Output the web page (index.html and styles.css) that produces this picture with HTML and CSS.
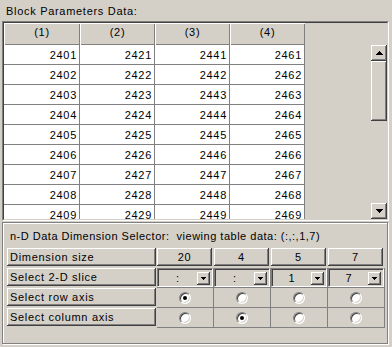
FILE: index.html
```html
<!DOCTYPE html>
<html>
<head>
<meta charset="utf-8">
<link rel="stylesheet" href="styles.css">
</head>
<body>
<div class="title">Block Parameters Data:</div>
<div class="frame">
  <div class="frame-inner">
    <div class="sheet">
      <div class="hrow">
        <div class="hcell w1">(1)</div>
        <div class="hcell">(2)</div>
        <div class="hcell">(3)</div>
        <div class="hcell">(4)</div>
      </div>
      <div class="drow"><div class="dcell w1">2401</div><div class="dcell">2421</div><div class="dcell">2441</div><div class="dcell">2461</div></div>
      <div class="drow"><div class="dcell w1">2402</div><div class="dcell">2422</div><div class="dcell">2442</div><div class="dcell">2462</div></div>
      <div class="drow"><div class="dcell w1">2403</div><div class="dcell">2423</div><div class="dcell">2443</div><div class="dcell">2463</div></div>
      <div class="drow"><div class="dcell w1">2404</div><div class="dcell">2424</div><div class="dcell">2444</div><div class="dcell">2464</div></div>
      <div class="drow"><div class="dcell w1">2405</div><div class="dcell">2425</div><div class="dcell">2445</div><div class="dcell">2465</div></div>
      <div class="drow"><div class="dcell w1">2406</div><div class="dcell">2426</div><div class="dcell">2446</div><div class="dcell">2466</div></div>
      <div class="drow"><div class="dcell w1">2407</div><div class="dcell">2427</div><div class="dcell">2447</div><div class="dcell">2467</div></div>
      <div class="drow"><div class="dcell w1">2408</div><div class="dcell">2428</div><div class="dcell">2448</div><div class="dcell">2468</div></div>
      <div class="drow"><div class="dcell w1">2409</div><div class="dcell">2429</div><div class="dcell">2449</div><div class="dcell">2469</div></div>
    </div>
    <div class="spacer"></div>
    <div class="vscroll">
      <div class="sbtn raised">
        <svg width="7" height="4" viewBox="0 0 7 4"><rect x="3" y="0" width="1" height="1"/><rect x="2" y="1" width="3" height="1"/><rect x="1" y="2" width="5" height="1"/><rect x="0" y="3" width="7" height="1"/></svg>
      </div>
      <div class="thumb raised"></div>
      <div class="track"></div>
      <div class="sbtn raised">
        <svg width="7" height="4" viewBox="0 0 7 4"><rect x="0" y="0" width="7" height="1"/><rect x="1" y="1" width="5" height="1"/><rect x="2" y="2" width="3" height="1"/><rect x="3" y="3" width="1" height="1"/></svg>
      </div>
    </div>
  </div>
</div>
<div class="panel">
  <div class="caption">n-D Data Dimension Selector:&nbsp; viewing table data: (:,:,1,7)</div>
  <div class="selgrid">
    <div class="lcell"><div class="lbtn raised">Dimension size</div></div>
    <div class="vcell"><div class="vbtn raised">20</div></div>
    <div class="vcell"><div class="vbtn raised">4</div></div>
    <div class="vcell"><div class="vbtn raised">5</div></div>
    <div class="vcell"><div class="vbtn raised">7</div></div>

    <div class="lcell"><div class="lbtn raised">Select 2-D slice</div></div>
    <div class="ccell"><div class="combo"><span class="ctext">:</span><span class="cbtn raised"><svg width="5" height="3" viewBox="0 0 5 3"><rect x="0" y="0" width="5" height="1"/><rect x="1" y="1" width="3" height="1"/><rect x="2" y="2" width="1" height="1"/></svg></span></div></div>
    <div class="ccell"><div class="combo"><span class="ctext">:</span><span class="cbtn raised"><svg width="5" height="3" viewBox="0 0 5 3"><rect x="0" y="0" width="5" height="1"/><rect x="1" y="1" width="3" height="1"/><rect x="2" y="2" width="1" height="1"/></svg></span></div></div>
    <div class="ccell"><div class="combo"><span class="ctext">1</span><span class="cbtn raised"><svg width="5" height="3" viewBox="0 0 5 3"><rect x="0" y="0" width="5" height="1"/><rect x="1" y="1" width="3" height="1"/><rect x="2" y="2" width="1" height="1"/></svg></span></div></div>
    <div class="ccell"><div class="combo"><span class="ctext">7</span><span class="cbtn raised"><svg width="5" height="3" viewBox="0 0 5 3"><rect x="0" y="0" width="5" height="1"/><rect x="1" y="1" width="3" height="1"/><rect x="2" y="2" width="1" height="1"/></svg></span></div></div>

    <div class="lcell"><div class="lbtn raised">Select row axis</div></div>
    <div class="rcell"><span class="radio on"></span></div>
    <div class="rcell"><span class="radio"></span></div>
    <div class="rcell"><span class="radio"></span></div>
    <div class="rcell"><span class="radio"></span></div>

    <div class="lcell"><div class="lbtn raised">Select column axis</div></div>
    <div class="rcell"><span class="radio"></span></div>
    <div class="rcell"><span class="radio on"></span></div>
    <div class="rcell"><span class="radio"></span></div>
    <div class="rcell"><span class="radio"></span></div>
  </div>
</div>
</body>
</html>
```
FILE: styles.css
```css
* { box-sizing: border-box; }
body {
  margin: 0;
  width: 392px;
  height: 347px;
  overflow: hidden;
  background: #d4d0c8;
  color: #000;
  font-family: "Liberation Sans", Arial, sans-serif;
  font-size: 11px;
  letter-spacing: 0.7px;
}
.raised {
  background: #d4d0c8;
  box-shadow: inset -1px -1px #404040, inset 1px 1px #fff, inset -2px -2px #808080;
}
.title {
  height: 21px;
  padding: 5px 0 0 6px;
  line-height: 13px;
}
.frame {
  margin-left: 2px;
  width: 387px;
  height: 200px;
  border: 1px solid;
  border-color: #808080 #fff #fff #808080;
}
.frame-inner {
  height: 100%;
  border: 1px solid;
  border-color: #404040 #d4d0c8 #d4d0c8 #404040;
  display: flex;
  overflow: hidden;
}
.sheet { width: 301px; flex: none; }
.hrow { display: flex; height: 22px; }
.hcell {
  width: 75px;
  height: 22px;
  line-height: 18px;
  text-align: center;
  background: #d4d0c8;
  box-shadow: inset 1px 1px #fff, inset -1px -1px #808080;
}
.w1 { width: 76px !important; }
.drow { display: flex; height: 20px; }
.dcell {
  width: 75px;
  height: 20px;
  background: #fff;
  border-right: 1px solid #808080;
  border-bottom: 1px solid #808080;
  text-align: right;
  padding: 1px 2px 0 0;
  line-height: 18px;
}
.spacer { flex: 1; }
.vscroll {
  width: 16px;
  flex: none;
  margin-top: 22px;
  display: flex;
  flex-direction: column;
}
.sbtn {
  height: 16px;
  flex: none;
  display: flex;
  align-items: center;
  justify-content: center;
}
.sbtn svg { display: block; fill: #000; }
.thumb { height: 60px; flex: none; }
.track { flex: 1; background: #d4d0c8; }

.panel {
  margin: 1px 0 0 2px;
  width: 386px;
  height: 122px;
  border: 1px solid #808080;
  box-shadow: inset 1px 1px #fff, 1px 1px #fff;
}
.caption {
  padding: 7px 0 0 7px;
  line-height: 13px;
  white-space: nowrap;
  letter-spacing: 0.5px;
}
.selgrid {
  margin: 5px 0 0 4px;
  display: grid;
  grid-template-columns: 150px repeat(4, 57px);
  grid-auto-rows: 20px;
}
.lcell { padding-right: 1px; }
.lbtn {
  height: 18px;
  line-height: 18px;
  padding-left: 3px;
  white-space: nowrap;
}
.vbtn {
  width: 55px;
  height: 18px;
  line-height: 18px;
  text-align: center;
}
.ccell {
  border-right: 1px solid #808080;
  border-bottom: 1px solid #808080;
}
.combo {
  height: 19px;
  display: flex;
  align-items: center;
  border: 1px solid;
  border-color: #808080 #fff #fff #808080;
  box-shadow: inset 1px 1px #404040, inset -1px -1px #d4d0c8;
  padding: 1px 2px 0 1px;
}
.ctext { flex: 1; text-align: center; line-height: 15px; }
.cbtn {
  width: 13px;
  height: 13px;
  flex: none;
  display: flex;
  align-items: center;
  justify-content: center;
}
.cbtn svg { display: block; fill: #000; }
.rcell {
  border-right: 1px solid #808080;
  border-bottom: 1px solid #808080;
  display: flex;
  align-items: center;
  justify-content: center;
}
.radio {
  position: relative;
  width: 12px;
  height: 12px;
  border-radius: 50%;
  background: #fff;
  border: 1px solid;
  border-color: #808080 #fff #fff #808080;
  box-shadow: inset 1px 1px #404040, inset -1px -1px #d4d0c8;
}
.radio.on::after {
  content: "";
  position: absolute;
  left: 3px;
  top: 3px;
  width: 4px;
  height: 4px;
  border-radius: 50%;
  background: #000;
}
```
